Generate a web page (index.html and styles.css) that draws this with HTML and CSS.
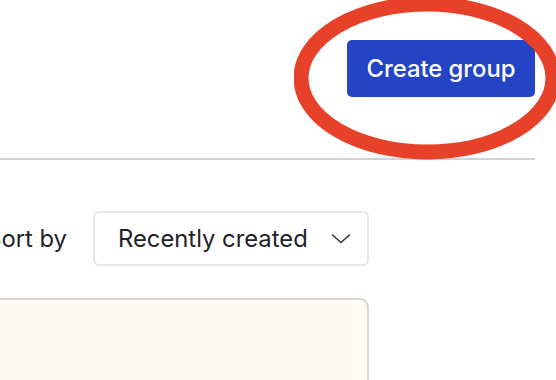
FILE: index.html
```html
<!DOCTYPE html>
<html>
<head>
<meta charset="utf-8">
<link rel="stylesheet" href="styles.css">
</head>
<body>
<div class="page">
  <header class="header">
    <button class="btn-primary">Create group</button>
  </header>
  <div class="content">
    <div class="toolbar">
      <span class="sort-label">Sort by</span>
      <div class="select">
        <span class="select-text">Recently created</span>
        <svg class="chevron" width="20" height="10" viewBox="0 0 20 10"><path d="M1.5 1 L10 8.5 L18.5 1" fill="none" stroke="#2b2f33" stroke-width="1.5" stroke-linecap="round" stroke-linejoin="round"/></svg>
      </div>
    </div>
    <div class="card"></div>
  </div>
</div>
<svg class="annotation" width="300" height="180" viewBox="0 0 300 180"><ellipse cx="133" cy="81" rx="126" ry="74" fill="none" stroke="#e8412a" stroke-width="15"/></svg>
</body>
</html>
```
FILE: styles.css
```css
html, body {
  margin: 0;
  padding: 0;
  background: #ffffff;
  overflow: hidden;
  width: 556px;
  height: 380px;
  font-family: Inter, "Liberation Sans", sans-serif;
  color: #1f2328;
}
.page {
  margin-left: -200px;
  width: 735px;
}
.header {
  height: 118px;
  border-bottom: 2px solid #cfd3d7;
  display: flex;
  justify-content: flex-end;
  align-items: flex-start;
  padding-top: 40px;
}
.btn-primary {
  width: 188px;
  height: 57px;
  background: #2344c4;
  color: #ffffff;
  border: none;
  border-radius: 5px;
  font-family: Inter, "Liberation Sans", sans-serif;
  font-size: 23.8px;
  font-weight: 500;
  padding: 0;
}
.content {
  width: 569px;
  padding-top: 51px;
}
.toolbar {
  display: flex;
  justify-content: flex-end;
  align-items: center;
  gap: 26px;
}
.sort-label {
  font-size: 23.8px;
}
.select {
  width: 276px;
  height: 55px;
  box-sizing: border-box;
  border: 2px solid #e4e6e8;
  border-radius: 6px;
  display: flex;
  align-items: center;
  justify-content: space-between;
  padding: 0 16px 0 23px;
}
.select-text {
  font-size: 23.8px;
}
.chevron {
  display: block;
}
.card {
  margin-top: 32px;
  height: 120px;
  border: 2px solid #d4d8dc;
  border-radius: 9px;
  background: #fffbf2;
}
.annotation {
  position: absolute;
  left: 294px;
  top: -3px;
}
```
